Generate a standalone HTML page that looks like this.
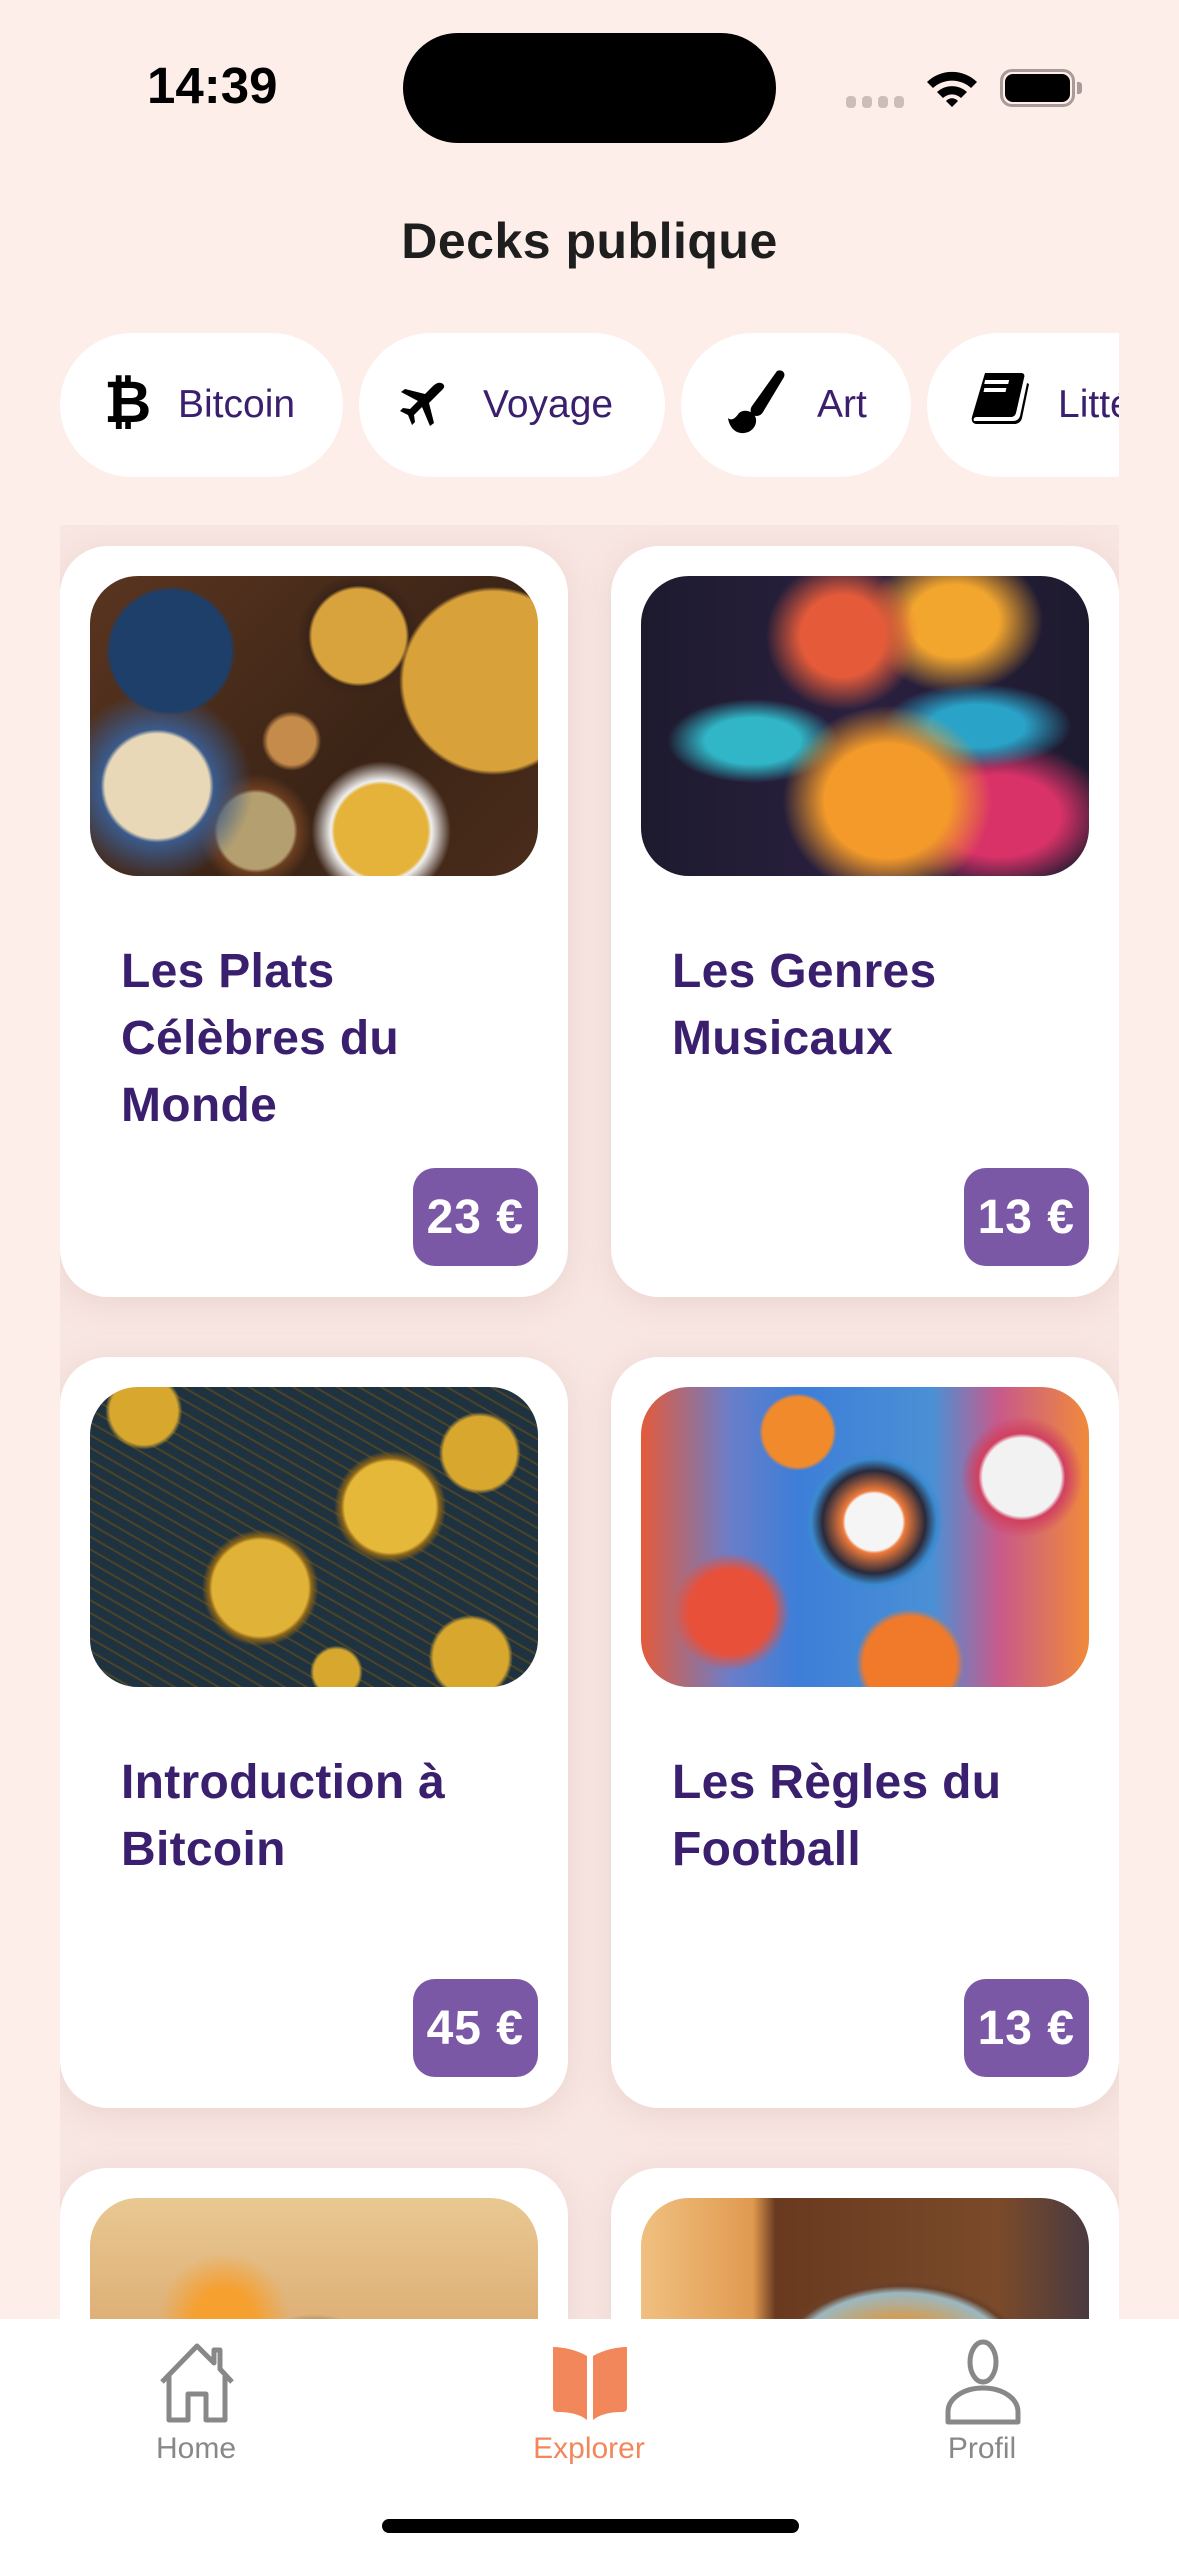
<!DOCTYPE html>
<html style="overflow:hidden"><head><meta charset="utf-8">
<style>
*{margin:0;padding:0;box-sizing:border-box}
html,body{width:1179px;height:2556px;overflow:hidden}
body{background:#fdeeea;font-family:"Liberation Sans",sans-serif;position:relative}
.abs{position:absolute}
.time{left:147px;top:56px;font-size:51px;font-weight:700;color:#000}
.island{left:403px;top:33px;width:373px;height:110px;border-radius:55px;background:#000}
.title{left:0;width:1179px;top:212px;text-align:center;font-size:50px;font-weight:700;color:#1e1e1e;letter-spacing:0.5px}
.pills{left:60px;top:333px;width:1059px;height:144px;overflow:hidden}
.pill{position:absolute;top:0;height:144px;border-radius:72px;background:#fff}
.pill span{font-size:39px;color:#3a1f6e;position:absolute;white-space:nowrap}
.grid{left:60px;top:525px;width:1059px;height:1794px;overflow:hidden;background:#f8e6e2}
.card{position:absolute;width:508px;height:751px;background:#fff;border-radius:48px;box-shadow:0 6px 30px rgba(200,160,150,.25)}
.img{position:absolute;left:30px;top:30px;width:448px;height:300px;border-radius:48px;overflow:hidden}
.ct{position:absolute;left:61px;top:392px;font-size:48px;font-weight:700;color:#3a1f6e;line-height:67px;width:345px;letter-spacing:0.3px}
.price{position:absolute;right:30px;top:622px;height:98px;border-radius:22px;background:#7b58a6;color:#fff;font-size:48px;font-weight:700;display:flex;align-items:center;justify-content:center;padding:0 14px;letter-spacing:1px}
.tab{left:0;top:2319px;width:1179px;height:237px;background:#fff}
.tl{position:absolute;top:2432px;font-size:30px;color:#888;text-align:center;width:200px}
</style></head><body>
<div class="abs time">14:39</div>
<div class="abs island"></div>
<div class="abs" style="left:846px;top:96px;width:10px;height:12px;border-radius:4px;background:#cdbdb9"></div>
<div class="abs" style="left:862px;top:96px;width:10px;height:12px;border-radius:4px;background:#cdbdb9"></div>
<div class="abs" style="left:878px;top:96px;width:10px;height:12px;border-radius:4px;background:#cdbdb9"></div>
<div class="abs" style="left:894px;top:96px;width:10px;height:12px;border-radius:4px;background:#cdbdb9"></div>
<svg class="abs" style="left:925px;top:68px" width="54" height="40" viewBox="0 0 54 40"><path d="M2 14 A36 36 0 0 1 52 14 L46 20 A28 28 0 0 0 8 20Z M12 24 A22 22 0 0 1 42 24 L36 30 A13 13 0 0 0 18 30Z M21 33 A8 8 0 0 1 33 33 L27 39Z" fill="#000"/></svg>
<div class="abs" style="left:1000px;top:69px;width:75px;height:38px;border:3px solid #a89b98;border-radius:12px"></div>
<div class="abs" style="left:1005px;top:74px;width:65px;height:28px;background:#000;border-radius:8px"></div>
<div class="abs" style="left:1077px;top:82px;width:5px;height:12px;background:#a89b98;border-radius:0 3px 3px 0"></div>
<div class="abs title">Decks publique</div>

<div class="abs pills">
 <div class="pill" style="left:0;width:283px"><span style="left:44px;font-size:58px;font-weight:700;color:#000;top:36px">₿</span><span style="left:118px;top:50px">Bitcoin</span></div>
 <div class="pill" style="left:299px;width:306px">
  <svg style="position:absolute;left:40px;top:48px" width="48" height="48" viewBox="0 0 48 48"><path d="M44 3 C40 0 36 3 33 6 L26 13 L6 8 L2 11 L19 20 L11 28 L4 27 L1 30 L9 34 L13 44 L16 41 L15 34 L23 26 L31 45 L35 42 L30 22 L40 12 C44 8 47 6 44 3Z" fill="#000"/></svg>
  <span style="left:124px;top:50px">Voyage</span></div>
 <div class="pill" style="left:621px;width:230px">
  <svg style="position:absolute;left:44px;top:36px" width="64" height="66" viewBox="0 0 64 66"><path d="M52 2 C56 0 61 3 59 8 L38 43 C36 47 31 48 28 46 C25 44 25 40 27 37Z" fill="#000"/><path d="M14 44 C20 39 30 43 31 50 C32 58 25 65 16 64 C8 63 4 56 3 49 C6 52 10 50 14 44Z" fill="#000"/></svg>
  <span style="left:136px;top:50px">Art</span></div>
 <div class="pill" style="left:867px;width:260px">
  <svg style="position:absolute;left:44px;top:38px" width="58" height="54" viewBox="0 0 58 54"><path d="M14 2 H50 C53 2 54 4 53 7 L45 42 C44 45 42 46 40 46 H6 C3 46 2 48 3 50 L3 50 H42 C46 50 48 48 49 45 L56 12 L58 13 L51 47 C50 51 47 53 43 53 H6 C2 53 0 50 1 46Z" fill="#000"/><rect x="16" y="9" width="24" height="4" fill="#fff" transform="skewX(-12)"/><rect x="17" y="17" width="22" height="4" fill="#fff" transform="skewX(-12)"/></svg>
  <span style="left:131px;top:50px">Littérature</span></div>
</div>

<div class="abs grid">
 <div class="card" style="left:0;top:21px">
  <div class="img" style="background:radial-gradient(circle at 18% 25%,#1d3f6a 0 14%,transparent 15%),radial-gradient(circle at 90% 35%,#d9a13a 0 20%,transparent 21%),radial-gradient(circle at 60% 20%,#d8a33c 0 13%,#3a2418 14%,transparent 17%),radial-gradient(circle at 15% 70%,#e8d8b8 0 12%,#3b5a8a 13%,transparent 22%),radial-gradient(circle at 65% 85%,#e5b23a 0 12%,#f0f0f0 13%,transparent 18%),radial-gradient(circle at 37% 85%,#b39f70 0 10%,#6b3d20 11%,transparent 15%),radial-gradient(circle at 45% 55%,#c58b4a 0 8%,transparent 10%),linear-gradient(135deg,#5a3520,#3b2416 60%,#4a2c1a)"></div>
  <div class="ct">Les Plats Célèbres du Monde</div>
  <div class="price">23 €</div>
 </div>
 <div class="card" style="left:551px;top:21px">
  <div class="img" style="background:radial-gradient(ellipse at 55% 75%,#f39a2a 0 18%,transparent 30%),radial-gradient(ellipse at 45% 20%,#e55b3a 0 12%,transparent 22%),radial-gradient(ellipse at 75% 50%,#2aa3c9 0 10%,transparent 20%),radial-gradient(ellipse at 25% 55%,#30b6c6 0 10%,transparent 18%),radial-gradient(ellipse at 80% 80%,#d93268 0 12%,transparent 22%),radial-gradient(ellipse at 70% 15%,#f3a62e 0 10%,transparent 20%),linear-gradient(90deg,#1d1a2e,#2a2040 50%,#1d1a2e)"></div>
  <div class="ct">Les Genres Musicaux</div>
  <div class="price">13 €</div>
 </div>
 <div class="card" style="left:0;top:832px">
  <div class="img" style="background:radial-gradient(circle at 67% 40%,#e6b83a 0 13%,#8a6418 14%,transparent 16%),radial-gradient(circle at 38% 67%,#e0b238 0 14%,#8a6418 15%,transparent 17%),radial-gradient(circle at 12% 8%,#d8a82e 0 7%,transparent 8%),radial-gradient(circle at 87% 22%,#d8a82e 0 8%,transparent 9%),radial-gradient(circle at 85% 90%,#d8a82e 0 8%,transparent 9%),radial-gradient(circle at 55% 95%,#d8a82e 0 6%,transparent 7%),repeating-linear-gradient(30deg,#1f3240 0 8px,#5a4a20 9px,#1f3240 11px),#1f3240"></div>
  <div class="ct">Introduction à Bitcoin</div>
  <div class="price">45 €</div>
 </div>
 <div class="card" style="left:551px;top:832px">
  <div class="img" style="background:radial-gradient(circle at 52% 45%,#f5f5f5 0 10%,#ee7a3a 11%,#2a2a3a 18%,#3a8ad0 22%,transparent 24%),radial-gradient(circle at 35% 15%,#f08a2a 0 9%,transparent 10%),radial-gradient(circle at 85% 30%,#f2f2f2 0 9%,#d04060 10%,transparent 14%),radial-gradient(circle at 20% 75%,#e8503a 0 10%,transparent 14%),radial-gradient(circle at 60% 92%,#f07a2a 0 12%,transparent 14%),linear-gradient(90deg,#e45a3a 0,#6a7ec9 20%,#3d7ed8 35%,#4a90d6 65%,#c85a8a 80%,#f08a3a 100%)"></div>
  <div class="ct">Les Règles du Football</div>
  <div class="price">13 €</div>
 </div>
 <div class="card" style="left:0;top:1643px">
  <div class="img" style="background:radial-gradient(circle at 30% 40%,#f6a030 0 8%,transparent 18%),radial-gradient(ellipse at 50% 60%,#2c3434 0 15%,transparent 25%),radial-gradient(ellipse at 75% 70%,#3a3a3a 0 10%,#c98a50 11%,transparent 20%),linear-gradient(180deg,#e9c892,#d8a56a 60%,#a86838)"></div>
 </div>
 <div class="card" style="left:551px;top:1643px">
  <div class="img" style="background:radial-gradient(ellipse at 58% 55%,#d89a4a 0 18%,#9bb8c0 30%,#6a4028 33%,transparent 35%),linear-gradient(90deg,#f0c080 0,#e09a50 25%,#6a3a20 30%,#7a4a2a 80%,#4a3a40 100%)"></div>
 </div>
</div>

<div class="abs tab"></div>
<svg class="abs" style="left:156px;top:2342px" width="82" height="82" viewBox="0 0 82 82"><path d="M6 40 L41 4 L58 21 V8 H64 V27 L76 40 M13 34 V78 H32 V52 H50 V78 H69 V34" fill="none" stroke="#888" stroke-width="5" stroke-linejoin="round"/></svg>
<svg class="abs" style="left:549px;top:2342px" width="82" height="82" viewBox="0 0 82 82"><path d="M4 5 C14 5 28 8 38 14 V78 C28 70 14 70 8 70 C5 70 4 68 4 66Z M78 5 C68 5 54 8 44 14 V78 C54 70 68 70 74 70 C77 70 78 68 78 66Z" fill="#f3875c"/></svg>
<svg class="abs" style="left:942px;top:2338px" width="82" height="88" viewBox="0 0 82 88"><ellipse cx="41" cy="24" rx="13" ry="20" fill="none" stroke="#888" stroke-width="5"/><path d="M6 84 V74 C6 60 22 50 41 50 C60 50 76 60 76 74 V84Z" fill="none" stroke="#888" stroke-width="5" stroke-linejoin="round"/></svg>
<div class="tl" style="left:96px">Home</div>
<div class="tl" style="left:489px;color:#f3875c">Explorer</div>
<div class="tl" style="left:882px">Profil</div>
<div class="abs" style="left:382px;top:2519px;width:417px;height:14px;border-radius:7px;background:#000"></div>
</body></html>
